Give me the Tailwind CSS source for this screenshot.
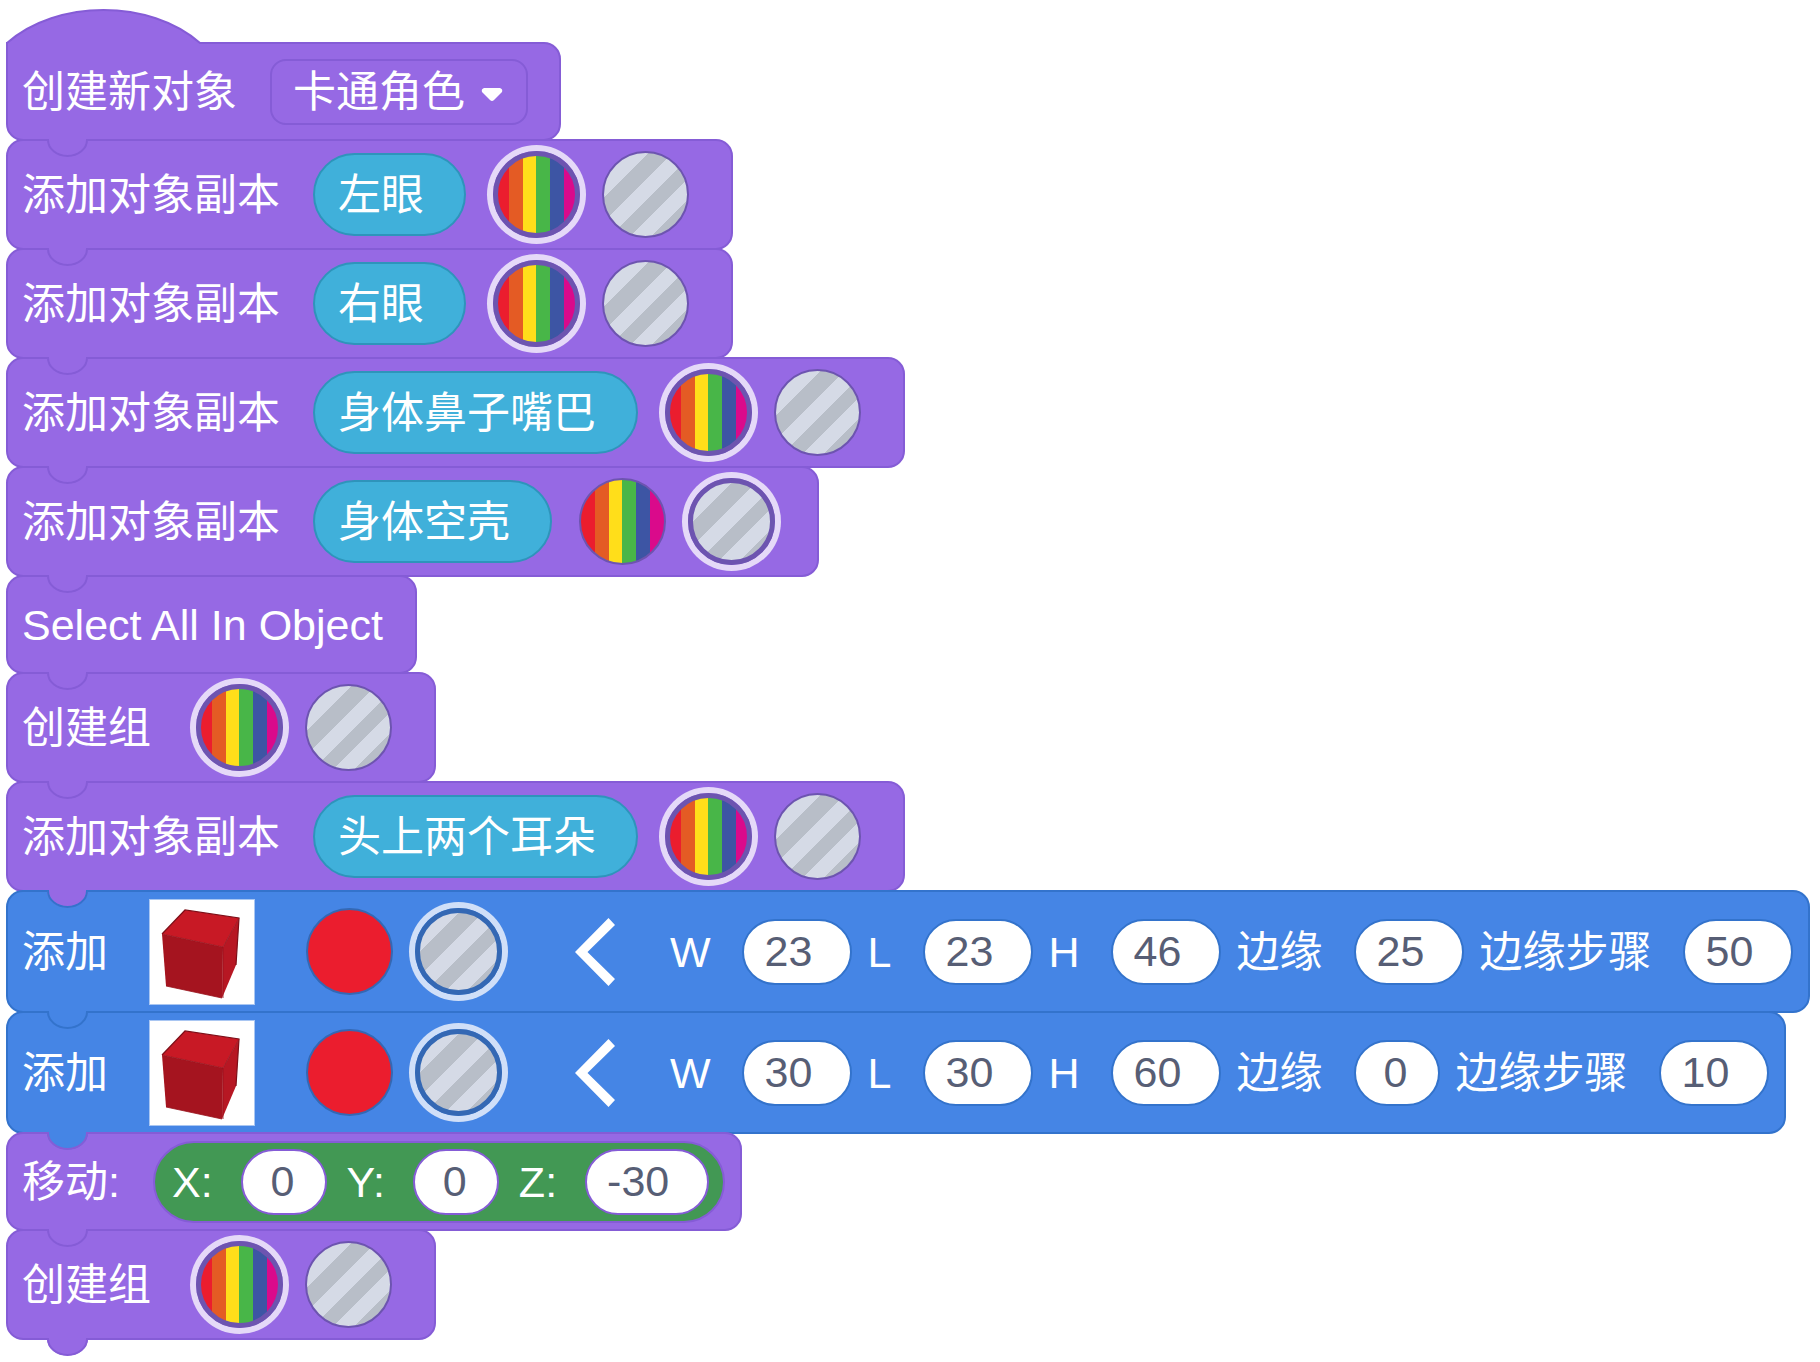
<!DOCTYPE html>
<html lang="zh-CN">
<head>
<meta charset="utf-8">
<meta name="viewport" content="width=device-width, initial-scale=1">
<title>代码块</title>
<script src="https://cdn.jsdelivr.net/npm/@tailwindcss/browser@4"></script>
</head>
<body class="bg-white">
<main id="stack" class="flex flex-col items-start pt-[42px] pl-[6px] pb-5 font-['Liberation_Sans','Noto_Sans_CJK_SC',sans-serif] text-[43px] leading-[60px] whitespace-nowrap text-white"></main>

<script>
const PURPLE = { fill: '#9669e4', line: '#855cd6' };
const BLUE = { fill: '#4585e5', line: '#3373cc' };

// Connector tab that hangs from a block into the one below it
const tab = (fill, line) => `
  <svg class="absolute top-full left-[38px] z-10 h-[19px] w-[43px]" viewBox="0 0 43 19" aria-hidden="true">
    <path d="M1 0V1A20.5 16.5 0 0 0 42 1V0Z" fill="${fill}"/>
    <path d="M2 0V1A19.5 16 0 0 0 41 1V0" fill="none" stroke="${line}" stroke-width="2"/>
  </svg>`;

const heights = { sm: 'h-[99px]', md: 'h-[111px]', lg: 'h-[123px]' };
const pads = { wide: 'pr-[36px]', hat: 'rounded-tl-none pr-[31px]', text: 'pr-[32px]', slim: 'pr-[15px]' };
const tones = {
  purple: 'border-[#855cd6] bg-[#9669e4]',
  blue: 'border-[#3373cc] bg-[#4585e5]'
};
const block = (tone, size, pad, next, html) => `
  <section class="relative -mb-[2px] flex items-center rounded-[17px] border-2 pl-[14px] ${tones[tone]} ${heights[size]} ${pads[pad]}">
    ${html}
    ${tab((tone === 'blue' ? BLUE : PURPLE).fill, (next === 'blue' ? BLUE : PURPLE).line)}
  </section>`;

const fills = {
  rainbow: 'bg-[linear-gradient(90deg,#eb1d2e_16px,#e45b24_16px_30px,#ffde1a_30px_43px,#48b648_43px_57px,#3d55a4_57px_71px,#da0a8b_71px)]',
  red: 'bg-[#eb1d2e]',
  hole: 'bg-[linear-gradient(135deg,#d5dae6_34px,#b8bec8_34px_51px,#d5dae6_51px_66px,#b8bec8_66px_80px,#d5dae6_80px_95px,#b8bec8_95px)]'
};
const rings = {
  purple: 'border-[#6d54b0] checked:ring-[#e5d9f8]',
  blue: 'border-[#3468b4] checked:ring-[#d0dff8]'
};
let group = 0;
const picker = (tone, solid, picked) => {
  group++;
  const dot = (fill, label, on) => `<input type="radio" name="fill-${group}" aria-label="${label}" ${on ? 'checked' : ''}
      class="m-[6px] size-[87px] shrink-0 appearance-none rounded-full border-2 bg-origin-border checked:border-[5px] checked:ring-[6px] ${rings[tone]} ${fills[fill]}">`;
  return `<div class="flex gap-[10px]" role="radiogroup" aria-label="填充">
    ${dot(solid, '实体', picked === 'solid')}${dot('hole', '空心', picked === 'hole')}</div>`;
};

const widths = { 1: 'w-[86px] pl-[28px]', 2: 'w-[110px] pl-[21px]', 3: 'w-[124px] pl-[20px]' };
const lines = { purple: 'border-[#855cd6]', blue: 'border-[#3373cc]' };
const number = (tone, label, value, gap) => `
  <label class="flex items-center ${gap}"><span>${label}</span>
    <input type="text" value="${value}" class="h-[66px] shrink-0 rounded-full border-2 bg-white text-[#575e75] ${lines[tone]} ${widths[value.length]}">
  </label>`;

const copy = (name, picked, next) => block('purple', 'md', 'wide', next, `
  <span>添加对象副本</span>
  <button type="button" class="mr-[21px] ml-[33px] flex h-[83px] items-center rounded-full border-2 border-[#2e94bb] bg-[#40b0da] pr-[40px] pl-[23px]">${name}</button>
  ${picker('purple', 'rainbow', picked)}`);

const makeGroup = () => block('purple', 'md', 'wide', 'purple', `
  <span class="mr-[39px]">创建组</span>${picker('purple', 'rainbow', 'solid')}`);

const box = (values, next) => block('blue', 'lg', 'slim', next, `
  <span>添加</span>
  <svg class="mr-[45px] ml-[41px] size-[106px] shrink-0" viewBox="0 0 106 106" role="img" aria-label="立方体">
    <rect x=".5" y=".5" width="105" height="105" fill="#fff" stroke="#a9c6f2"/>
    <path d="M36 11 90 19 74 48 13 35Z" fill="#c81925"/>
    <path d="M13 35 74 48 73 99 17 87Z" fill="#a5141f"/>
    <path d="M90 19 87 66 73 99 74 48Z" fill="#b71723"/>
    <path d="M13 35 36 11 90 19 87 66" fill="none" stroke="#7d0f18" stroke-width="1.2"/>
    <path d="M13 35 74 48 90 19M74 48V99M17 87 73 99" fill="none" stroke="#98111c" stroke-width=".8"/>
  </svg>
  ${picker('blue', 'red', 'hole')}
  <button type="button" class="mr-[55px] ml-[67px]" aria-label="收起">
    <svg class="h-[68px] w-[40px]" viewBox="0 0 40 68" aria-hidden="true"><path d="M0 34 33.500 0 40 7 12.500 34 40 61 33.500 68Z" fill="#fff"/></svg>
  </button>
  <div class="flex gap-[16px]">
    ${['W', 'L', 'H', '边缘', '边缘步骤'].map((l, i) => number('blue', l, values[i], 'gap-[31px]')).join('')}
  </div>`);

const hat = `
  <svg class="absolute -top-[36px] -left-[2px] h-[40px] w-[197px]" viewBox="0 0 197 40" aria-hidden="true">
    <path d="M1 40V35C51 -9 144 -9 194 35L196 36V40Z" fill="#9669e4"/>
    <path d="M1 40V35C51 -9 144 -9 194 35H197" fill="none" stroke="#855cd6" stroke-width="2"/>
  </svg>`;

document.getElementById('stack').innerHTML = [
  block('purple', 'sm', 'hat', 'purple', `${hat}
    <label for="object">创建新对象</label>
    <div class="relative ml-[33px]">
      <select id="object" class="block h-[66px] w-[258px] appearance-none rounded-[16px] border-2 border-[#855cd6] bg-[#9669e4] pl-[21px]"><option>卡通角色</option></select>
      <svg class="pointer-events-none absolute top-[28px] right-[25px] h-[15px] w-[22px]" viewBox="0 0 22 15" aria-hidden="true"><path d="M3 1H19Q22 2 21 5L13 13Q11 15 9 13L1 5Q0 2 3 1Z" fill="#fff"/></svg>
    </div>`),
  copy('左眼', 'solid'),
  copy('右眼', 'solid'),
  copy('身体鼻子嘴巴', 'solid'),
  copy('身体空壳', 'hole'),
  block('purple', 'sm', 'text', 'purple', '<span>Select All In Object</span>'),
  makeGroup(),
  copy('头上两个耳朵', 'solid', 'blue'),
  box(['23', '23', '46', '25', '50'], 'blue'),
  box(['30', '30', '60', '0', '10'], 'purple'),
  block('purple', 'sm', 'slim', 'purple', `
    <span>移动:</span>
    <div class="ml-[33px] flex h-[82px] items-center gap-[20px] rounded-full border-2 border-[#855cd6] bg-[#429854] pr-[14px] pl-[17px]">
      ${number('purple', 'X:', '0', 'gap-[28px]')}${number('purple', 'Y:', '0', 'gap-[28px]')}${number('purple', 'Z:', '-30', 'gap-[28px]')}
    </div>`),
  makeGroup()
].join('');
</script>
</body>
</html>
